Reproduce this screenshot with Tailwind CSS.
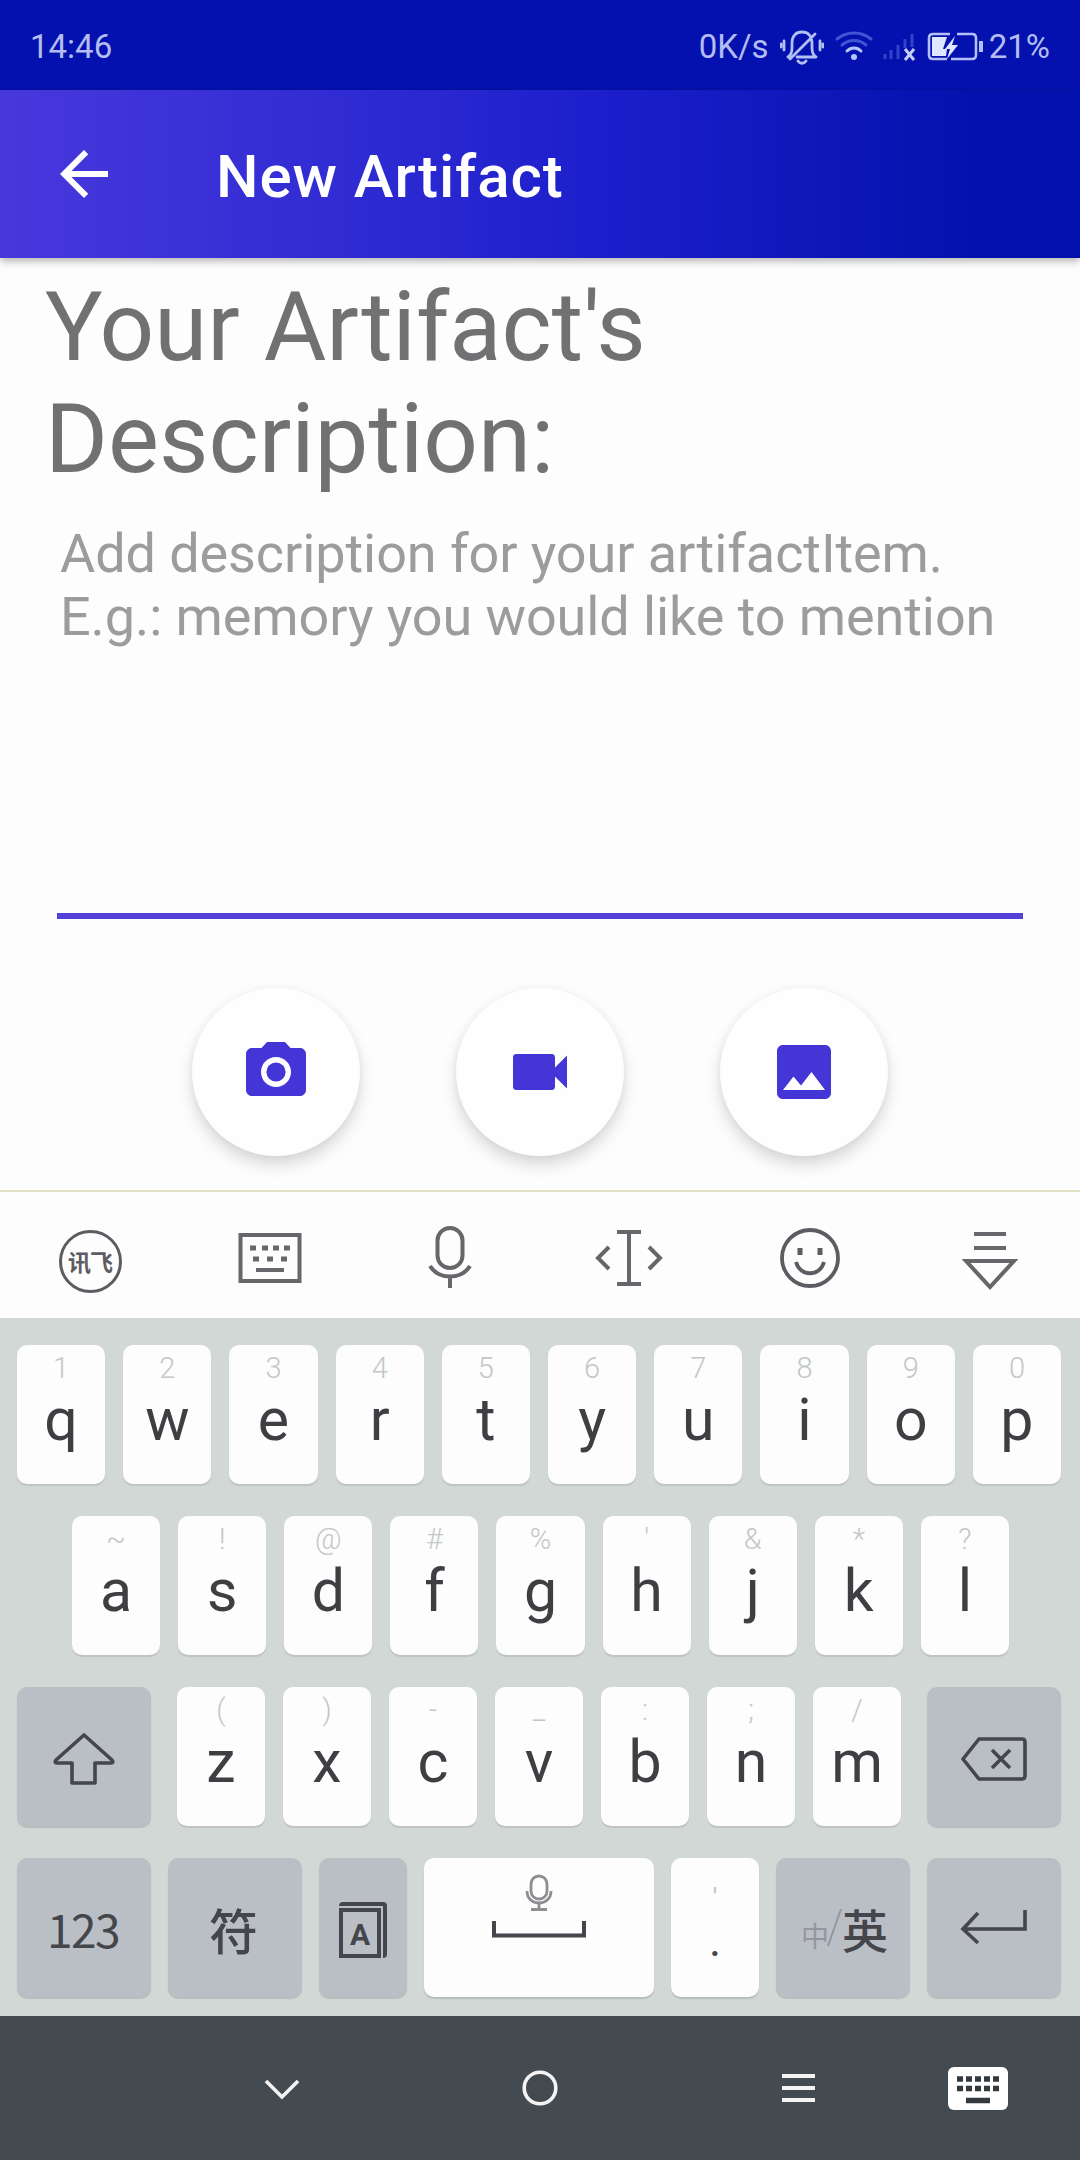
<!DOCTYPE html>
<html lang="en">
<head>
<meta charset="utf-8">
<title>New Artifact</title>
<script src="https://cdn.jsdelivr.net/npm/@tailwindcss/browser@4"></script>
</head>
<body class="w-[1080px] h-[2160px] overflow-hidden bg-[#fdfdfd] font-['Roboto','Noto_Sans_CJK_SC',sans-serif] flex flex-col">

<!-- Status bar -->
<div class="h-[90px] shrink-0 bg-[#0411ae] flex items-center pl-[30px] pr-[30px] text-[#b3bdf2] text-[33px] leading-[40px] pt-[3px]">
  <span>14:46</span>
  <span class="ml-auto w-[70px]">0K/s</span>
  <svg class="ml-[11px] w-[44px] h-[40px]" viewBox="0 0 44 40" fill="none" stroke="#b3c0f5" stroke-width="2.8" stroke-linecap="round" stroke-linejoin="round">
    <path d="M8 30c3-2 4-5 4-9v-5c0-7 4-11 10-11s10 4 10 11v5c0 4 1 7 4 9H17M18 34c2 3 6 3 8 0M10 32L35 7M4 14v9M40 14v9M1 17v3M43 17v3"/>
  </svg>
  <svg class="ml-[10px] w-[40px] h-[34px]" viewBox="0 0 40 34" fill="none" stroke-width="3" stroke-linecap="round">
    <path d="M3 9c10-8 24-8 34 0M8 15c7-6 17-6 24 0" stroke="#3f55d3"/>
    <path d="M13 21c4-4 10-4 14 0" stroke="#b3c8f8"/>
    <circle cx="20" cy="27" r="3" fill="#b3c8f8"/>
  </svg>
  <svg class="ml-[7px] w-[36px] h-[34px]" viewBox="0 0 36 34" fill="none" stroke-width="3">
    <path d="M4 24v5M10 20v9M17 15v14M24 9v9M31 4v13" stroke="#3044c8"/>
    <path d="M24 19l9 11M33 19l-9 11" stroke="#c3cff8"/>
  </svg>
  <svg class="ml-[10px] w-[58px] h-[30px]" viewBox="0 0 58 30" fill="none">
    <path d="M23 2H6Q2 2 2 6v17q0 4 4 4h14M30 2h15q4 0 4 4v17q0 4-4 4H24" stroke="#b3c0f5" stroke-width="2.6"/>
    <path d="M5 5h15l-4 12h4l-1 7H5z" fill="#dfe6ff"/>
    <path d="M28 4L18 17h5l-3 10 11-14h-6z" fill="#dfe6ff"/>
    <path d="M54 9v11" stroke="#b3c0f5" stroke-width="4"/>
  </svg>
  <span class="ml-[4px]">21%</span>
</div>

<!-- App bar -->
<header class="relative z-10 h-[168px] shrink-0 flex items-center bg-linear-to-r from-[#4838dc] via-[#1c1fcc] via-55% to-[#0211ab] to-92% shadow-[0_3px_8px_rgba(0,0,0,0.3)]">
  <svg class="ml-[48px] w-[72px] h-[72px]" viewBox="0 0 24 24" fill="#fff"><path d="M20 11H7.83l5.59-5.59L12 4l-8 8 8 8 1.41-1.41L7.83 13H20v-2z"/></svg>
  <h1 class="ml-[96px] pt-[5px] text-white text-[60px] leading-[70px] font-medium tracking-[0.9px]">New Artifact</h1>
</header>

<!-- Form -->
<main class="h-[932px] shrink-0 flex flex-col pt-[13px]">
  <h2 class="ml-[45px] text-[#717173] text-[96px] leading-[112px]">Your Artifact's<br>Description:</h2>
  <div class="mx-[57px] mt-[27px] h-[397px] border-b-[6px] border-[#5240d8] pl-[3px] text-[#9c9c9f] text-[54px] leading-[63px] tracking-[-0.09px] whitespace-nowrap">Add description for your artifactItem.<br>E.g.: memory you would like to mention</div>
  <div class="mt-[69px] flex justify-center gap-[96px]">
    <div class="size-[168px] rounded-full bg-[#fefefe] flex items-center justify-center shadow-[0_9px_16px_rgba(0,0,0,0.15),0_0_8px_rgba(0,0,0,0.04)]">
      <svg class="size-[72px]" viewBox="0 0 24 24" fill="#4335d6"><circle cx="12" cy="12" r="3.2"/><path d="M9 2L7.17 4H4c-1.1 0-2 .9-2 2v12c0 1.1.9 2 2 2h16c1.1 0 2-.9 2-2V6c0-1.1-.9-2-2-2h-3.17L15 2H9zm3 15c-2.76 0-5-2.24-5-5s2.24-5 5-5 5 2.24 5 5-2.24 5-5 5z"/></svg>
    </div>
    <div class="size-[168px] rounded-full bg-[#fefefe] flex items-center justify-center shadow-[0_9px_16px_rgba(0,0,0,0.15),0_0_8px_rgba(0,0,0,0.04)]">
      <svg class="size-[72px]" viewBox="0 0 24 24" fill="#4335d6"><path d="M17 10.5V7c0-.55-.45-1-1-1H4c-.55 0-1 .45-1 1v10c0 .55.45 1 1 1h12c.55 0 1-.45 1-1v-3.5l4 4v-11l-4 4z"/></svg>
    </div>
    <div class="size-[168px] rounded-full bg-[#fefefe] flex items-center justify-center shadow-[0_9px_16px_rgba(0,0,0,0.15),0_0_8px_rgba(0,0,0,0.04)]">
      <svg class="size-[72px]" viewBox="0 0 24 24" fill="#4335d6"><path d="M21 19V5c0-1.100-.9-2-2-2H5c-1.100 0-2 .9-2 2v14c0 1.100.9 2 2 2h14c1.100 0 2-.9 2-2zM8.500 13.500l2.500 3.010L14.500 12l4.500 6H5l3.500-4.500z"/></svg>
    </div>
  </div>
</main>

<!-- Keyboard toolbar -->
<div class="h-[128px] shrink-0 border-t-2 border-[#e2e0c4] bg-[#fdfdfd] grid grid-cols-6 justify-items-center items-center">
  <div class="size-[63px] mt-[13px] rounded-full border-[3px] border-[#5c5c62] flex items-center justify-center text-[#5c5c62] text-[23px] leading-none font-bold tracking-[-1px] font-['Noto_Sans_CJK_SC',sans-serif]">讯飞</div>
  <svg class="mt-[6px] w-[64px] h-[52px]" viewBox="0 0 64 52" fill="none" stroke="#66666b" stroke-width="4">
    <rect x="2.500" y="3" width="59" height="46"/>
    <path d="M12 16h6M24 16h6M35 16h6M46 16h6M15 27h6M29 27h6M43 27h6" stroke-width="5"/><path d="M18 38h28"/>
  </svg>
  <svg class="mt-[6px] w-[46px] h-[66px]" viewBox="0 0 46 66" fill="none" stroke="#66666b" stroke-width="4">
    <rect x="10.500" y="3" width="25" height="40" rx="12.500"/><path d="M3 41c9 14 31 14 40 0M23 52v11"/>
  </svg>
  <svg class="mt-[6px] mr-[3px] w-[70px] h-[58px]" viewBox="0 0 70 58" fill="none" stroke="#66666b" stroke-width="4">
    <path d="M23 3h24M35 3v52M23 55h24M15 18L4 29l11 11M55 18l11 11-11 11"/>
  </svg>
  <svg class="mt-[6px] size-[62px]" viewBox="0 0 62 62" fill="none" stroke="#5c5c62" stroke-width="3.800">
    <circle cx="31" cy="31" r="28"/><path d="M17 35c4 15 24 15 28 0"/><path d="M21 21v7M41 21v7" stroke-width="5"/>
  </svg>
  <svg class="mt-[10px] w-[56px] h-[62px]" viewBox="0 0 56 62" fill="none" stroke="#66666b" stroke-width="4">
    <path d="M12 5h32M12 19h32M4 32h48L28 58z"/>
  </svg>
</div>

<!-- Keyboard -->
<div class="h-[698px] shrink-0 bg-[#d2d8d6] pt-[27px] flex flex-col gap-[32px] pl-[17px] pr-[19px]">
  <div id="row1" class="flex gap-[18px] h-[139px]"></div>
  <div id="row2" class="flex gap-[18px] h-[139px] pl-[55px] pr-[52px]"></div>
  <div class="flex gap-[26px] h-[139px]">
    <div class="w-[134px] rounded-[10px] bg-[#babfc5] shadow-[0_2px_1px_rgba(80,80,90,0.2)] flex items-center justify-center">
      <svg class="w-[62px] h-[54px] mt-1" viewBox="0 0 62 54" fill="none" stroke="#45454c" stroke-width="3.600" stroke-linejoin="round"><path d="M31 3L3 28q-2 3 1 3h15v20h23V31h16q3 0 1-3z"/></svg>
    </div>
    <div id="row3" class="flex-1 flex gap-[18px]"></div>
    <div class="w-[134px] rounded-[10px] bg-[#babfc5] shadow-[0_2px_1px_rgba(80,80,90,0.2)] flex items-center justify-center">
      <svg class="w-[66px] h-[46px] mt-1" viewBox="0 0 66 46" fill="none" stroke="#45454c" stroke-width="3.600" stroke-linejoin="round"><path d="M18 3h43q3 0 3 3v34q0 3-3 3H18L2 23zM31 14l18 18M49 14L31 32"/></svg>
    </div>
  </div>
  <div class="flex justify-between h-[139px] text-[#45454c] font-['Noto_Sans_CJK_SC',sans-serif]">
    <div class="w-[134px] rounded-[10px] bg-[#babfc5] shadow-[0_2px_1px_rgba(80,80,90,0.2)] flex items-center justify-center text-[46px] tracking-[-1.5px] pr-[2px] pt-[2px]">123</div>
    <div class="w-[134px] rounded-[10px] bg-[#babfc5] shadow-[0_2px_1px_rgba(80,80,90,0.2)] flex items-center justify-center text-[49px] font-medium pr-[3px] pt-[2px]">符</div>
    <div class="w-[88px] rounded-[10px] bg-[#babfc5] shadow-[0_2px_1px_rgba(80,80,90,0.2)] flex items-center justify-center">
      <div class="w-[48px] h-[56px] mt-1 rounded-[4px] border-t-[4px] border-r-[4px] border-[#45454c] pt-[2px] pr-[2px]">
        <div class="size-full border-[4px] border-[#45454c] flex items-center justify-center text-[30px] leading-none font-bold font-['Roboto',sans-serif] pt-1">A</div>
      </div>
    </div>
    <div class="w-[230px] rounded-[10px] bg-[#fdfdfd] shadow-[0_2px_1px_rgba(80,80,90,0.2)] flex flex-col items-center pt-[16px]">
      <svg class="w-[28px] h-[38px]" viewBox="0 0 28 38" fill="none" stroke="#8e8e92" stroke-width="2.800"><rect x="6" y="2" width="16" height="23" rx="8"/><path d="M2 17c0 16 24 16 24 0M14 29v6M6 35.500h16"/></svg>
      <svg class="mt-[9px] w-[94px] h-[17px]" viewBox="0 0 94 17" fill="none" stroke="#45454c" stroke-width="4"><path d="M2 0v14.500h90V0"/></svg>
    </div>
    <div class="w-[88px] rounded-[10px] bg-[#fdfdfd] shadow-[0_2px_1px_rgba(80,80,90,0.2)] flex flex-col items-center font-['Roboto',sans-serif]">
      <span class="pt-[24px] text-[28px] leading-[34px] text-[#c4c4c8]">'</span>
      <span class="text-[46px] leading-[48px]">.</span>
    </div>
    <div class="w-[134px] rounded-[10px] bg-[#babfc5] shadow-[0_2px_1px_rgba(80,80,90,0.2)] flex items-center justify-center pl-[3px]">
      <span class="text-[28px] mt-[14px] text-[#9396a0]">中</span><svg class="w-[16px] h-[40px] -ml-[3px]" viewBox="0 0 16 40" fill="none" stroke="#9396a0" stroke-width="2"><path d="M15 1L2 38"/></svg><span class="text-[46px] font-medium pt-[2px]">英</span>
    </div>
    <div class="w-[134px] rounded-[10px] bg-[#babfc5] shadow-[0_2px_1px_rgba(80,80,90,0.2)] flex items-center justify-center">
      <svg class="w-[68px] h-[36px]" viewBox="0 0 68 36" fill="none" stroke="#45454c" stroke-width="3.600"><path d="M65 0v19H4M18 3L3 19l15 14"/></svg>
    </div>
  </div>
</div>

<!-- Navigation bar -->
<nav class="h-[144px] shrink-0 bg-[#444b50] flex items-center">
  <svg class="ml-[264px] mt-[4px] w-[36px] h-[22px]" viewBox="0 0 36 22" fill="none" stroke="#f4f4f4" stroke-width="3.600"><path d="M2 2l16 16L34 2"/></svg>
  <svg class="ml-[222px] size-[36px]" viewBox="0 0 36 36" fill="none" stroke="#f4f4f4" stroke-width="3.600"><circle cx="18" cy="18" r="15.800"/></svg>
  <svg class="ml-[224px] w-[33px] h-[30px]" viewBox="0 0 33 30" stroke="#f4f4f4" stroke-width="4"><path d="M0 3h33M0 15h33M0 27h33"/></svg>
  <svg class="ml-[133px] w-[60px] h-[43px]" viewBox="0 0 60 43"><rect width="60" height="43" rx="6" fill="#fff"/><path d="M9 12h6M18 12h6M27 12h6M36 12h6M45 12h6M9 21.500h6M18 21.500h6M27 21.500h6M36 21.500h6M45 21.500h6M18 33.500h24" stroke="#34393d" stroke-width="5.500"/></svg>
</nav>

<script>
const rows = {
  row1: [['q','1'],['w','2'],['e','3'],['r','4'],['t','5'],['y','6'],['u','7'],['i','8'],['o','9'],['p','0']],
  row2: [['a','~'],['s','!'],['d','@'],['f','#'],['g','%'],['h',"'"],['j','&amp;'],['k','*'],['l','?']],
  row3: [['z','('],['x',')'],['c','-'],['v','_'],['b',':'],['n',';'],['m','/']]
};
for (const [id, keys] of Object.entries(rows)) {
  document.getElementById(id).innerHTML = keys.map(([k, h]) =>
    `<div class="flex-1 rounded-[10px] bg-[#fdfdfd] shadow-[0_2px_1px_rgba(80,80,90,0.15)] flex flex-col items-center">
      <span class="pt-[6px] h-[41px] text-[29px] leading-[34px] font-light text-[#c3c7c6]">${h}</span>
      <span class="text-[#3e3e43] text-[59px] leading-[68px]">${k}</span>
    </div>`).join('');
}
</script>
</body>
</html>
